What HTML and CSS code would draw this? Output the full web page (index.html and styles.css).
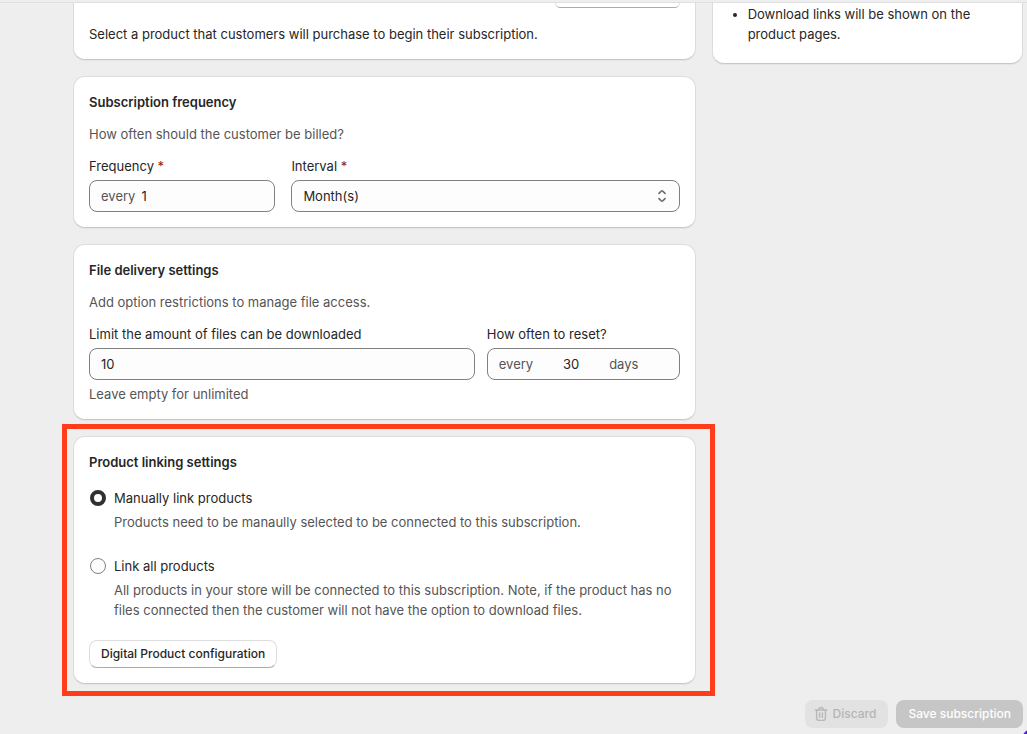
FILE: index.html
```html
<!DOCTYPE html>
<html lang="en">
<head>
    <meta charset="UTF-8">
    <meta name="viewport" content="width=device-width, initial-scale=1.0">
    <title>Subscription</title>
    <link rel="stylesheet" href="styles.css">
</head>
<body>
    <header class="topbar"></header>

    <form class="page">
        <main class="column">
            <section class="card card-first">
                <button type="button" class="btn btn-select" aria-label="Select product"></button>
                <p>Select a product that customers will purchase to begin their subscription.</p>
            </section>

            <section class="card">
                <h2>Subscription frequency</h2>
                <p class="subdued">How often should the customer be billed?</p>
                <div class="fields fields-frequency">
                    <div class="field">
                        <label for="frequency">Frequency <span class="required">*</span></label>
                        <div class="control">
                            <span class="affix">every</span>
                            <input type="text" id="frequency" value="1">
                        </div>
                    </div>
                    <div class="field">
                        <label for="interval">Interval <span class="required">*</span></label>
                        <div class="control">
                            <select id="interval">
                                <option>Month(s)</option>
                            </select>
                            <svg class="select-icon" viewBox="0 0 12 16" width="12" height="16" fill="none" stroke="#6a6a6a" stroke-width="1.6" stroke-linecap="round" stroke-linejoin="round">
                                <path d="M3 5.4 L5.4 3 Q6 2.5 6.6 3 L9 5.4"/>
                                <path d="M3 10.6 L5.4 13 Q6 13.5 6.6 13 L9 10.6"/>
                            </svg>
                        </div>
                    </div>
                </div>
            </section>

            <section class="card">
                <h2>File delivery settings</h2>
                <p class="subdued">Add option restrictions to manage file access.</p>
                <div class="fields fields-delivery">
                    <div class="field">
                        <label for="limit">Limit the amount of files can be downloaded</label>
                        <div class="control">
                            <input type="text" id="limit" value="10">
                        </div>
                        <p class="subdued">Leave empty for unlimited</p>
                    </div>
                    <div class="field">
                        <label for="reset">How often to reset?</label>
                        <div class="control">
                            <span class="affix">every</span>
                            <input type="text" id="reset" class="input-days" value="30">
                            <span class="affix">days</span>
                        </div>
                    </div>
                </div>
            </section>

            <section class="card card-linking">
                <h2>Product linking settings</h2>
                <div class="choices">
                    <div class="choice">
                        <input type="radio" name="linking" id="link-manual" checked>
                        <div class="choice-text">
                            <label for="link-manual">Manually link products</label>
                            <p class="subdued">Products need to be manaully selected to be connected to this subscription.</p>
                        </div>
                    </div>
                    <div class="choice">
                        <input type="radio" name="linking" id="link-all">
                        <div class="choice-text">
                            <label for="link-all">Link all products</label>
                            <p class="subdued">All products in your store will be connected to this subscription. Note, if the product has no files connected then the customer will not have the option to download files.</p>
                        </div>
                    </div>
                </div>
                <button type="button" class="btn">Digital Product configuration</button>
            </section>
        </main>

        <aside class="card card-info">
            <ul>
                <li>Download links will be shown on the product pages.</li>
            </ul>
        </aside>

        <footer class="actions">
            <button type="button" class="btn btn-discard" disabled>
                <svg viewBox="0 0 14 16" width="14" height="16" fill="none" stroke="#b9b9b9" stroke-width="1.4" stroke-linecap="round" stroke-linejoin="round">
                    <path d="M1.2 4 H12.8"/>
                    <path d="M4.7 3.8 C4.7 0.7 9.3 0.7 9.3 3.8"/>
                    <path d="M2.6 4.2 V12 Q2.6 14.4 5 14.4 H9 Q11.4 14.4 11.4 12 V4.2"/>
                    <path d="M5.6 7 V11.4 M8.4 7 V11.4"/>
                </svg>
                Discard
            </button>
            <button type="submit" class="btn btn-save" disabled>Save subscription</button>
        </footer>
    </form>

    <div class="chat-bubble"></div>
</body>
</html>
```

FILE: styles.css
```css
* {
    margin: 0;
    padding: 0;
    box-sizing: border-box;
}

body {
    background: #eeeeee;
    color: #262626;
    font-family: Inter, sans-serif;
    font-size: 13px;
    line-height: 20px;
}

input,
select,
button {
    font: inherit;
    color: inherit;
}

.topbar {
    height: 3px;
    border-bottom: 1px solid #e0e0e0;
}

.page {
    display: grid;
    grid-template-columns: 2fr 1fr;
    gap: 16px;
    align-items: start;
    padding: 0 4px 6px 73px;
}

.column {
    display: flex;
    flex-direction: column;
    gap: 16px;
    min-width: 0;
}

/* Cards */
.card {
    position: relative;
    display: flex;
    flex-direction: column;
    gap: 12px;
    padding: 15px;
    background: #fff;
    border: 1px solid #dcdcdc;
    border-bottom-color: #c8c8c8;
    border-radius: 12px;
    box-shadow: 0 1px 0 #e4e4e4;
}

.card-first,
.card-info {
    border-top: 0;
    border-radius: 0 0 12px 12px;
}

.card-first {
    gap: 16px;
    padding-top: 0;
}

.card-info {
    padding: 1px 19px 19px;
}

.card-info ul {
    padding-left: 16px;
}

.card h2 {
    font-size: 13px;
    font-weight: 600;
}

.subdued {
    color: #555;
}

.required {
    color: #8e1f0b;
}

/* Fields */
.fields {
    display: grid;
}

.fields-frequency {
    grid-template-columns: 12fr 25fr;
    gap: 16px;
}

.fields-delivery {
    grid-template-columns: 2fr 1fr;
    gap: 12px;
}

.field {
    display: flex;
    flex-direction: column;
    gap: 4px;
    min-width: 0;
}

.control {
    position: relative;
    display: flex;
    align-items: center;
    gap: 6px;
    height: 32px;
    padding: 0 11px;
    background: #fdfdfd;
    border: 1px solid #808080;
    border-radius: 8px;
}

.control input,
.control select {
    flex: 1;
    min-width: 0;
    background: none;
    border: 0;
    outline: 0;
    appearance: none;
}

.control .input-days {
    flex: 0 0 64px;
    text-align: center;
}

.affix {
    color: #555;
}

.select-icon {
    pointer-events: none;
}

/* Radio choices */
.choices {
    display: flex;
    flex-direction: column;
    gap: 24px;
    margin: 4px 0 8px;
}

.choice {
    display: flex;
    gap: 8px;
}

.choice input {
    flex: none;
    width: 16px;
    height: 16px;
    margin: 2px 0 0 1px;
    appearance: none;
    background: #fdfdfd;
    border: 1px solid #808080;
    border-radius: 50%;
}

.choice input:checked {
    background: #fff;
    border: 4px solid #303030;
}

.choice-text {
    display: flex;
    flex-direction: column;
    gap: 4px;
}

/* Highlight frame round the linking card */
.card-linking::after {
    content: "";
    position: absolute;
    inset: -13px -20px -13px -12px;
    border: 5px solid #ff3d1a;
    pointer-events: none;
}

/* Buttons */
.btn {
    display: flex;
    align-items: center;
    align-self: flex-start;
    gap: 4px;
    height: 28px;
    padding: 0 11px;
    background: #fff;
    border: 1px solid #dedede;
    border-bottom-color: #ababab;
    border-radius: 8px;
    font-size: 12px;
    font-weight: 550;
    white-space: nowrap;
}

.btn-select {
    align-self: flex-end;
    width: 125px;
    height: 5px;
    border-top: 0;
    border-radius: 0 0 8px 8px;
}

.actions {
    grid-column: 1 / -1;
    display: flex;
    justify-content: flex-end;
    gap: 8px;
}

.btn-discard {
    padding: 0 12px 0 9px;
    gap: 5px;
    background: #e2e2e2;
    border: 0;
    color: #b5b5b5;
}

.btn-save {
    padding: 0 12px;
    background: #c6c6c6;
    border: 0;
    color: #fff;
}

.chat-bubble {
    position: fixed;
    right: -39px;
    bottom: -39px;
    width: 48px;
    height: 48px;
    background: #4b22c4;
    border-radius: 50%;
}
```
